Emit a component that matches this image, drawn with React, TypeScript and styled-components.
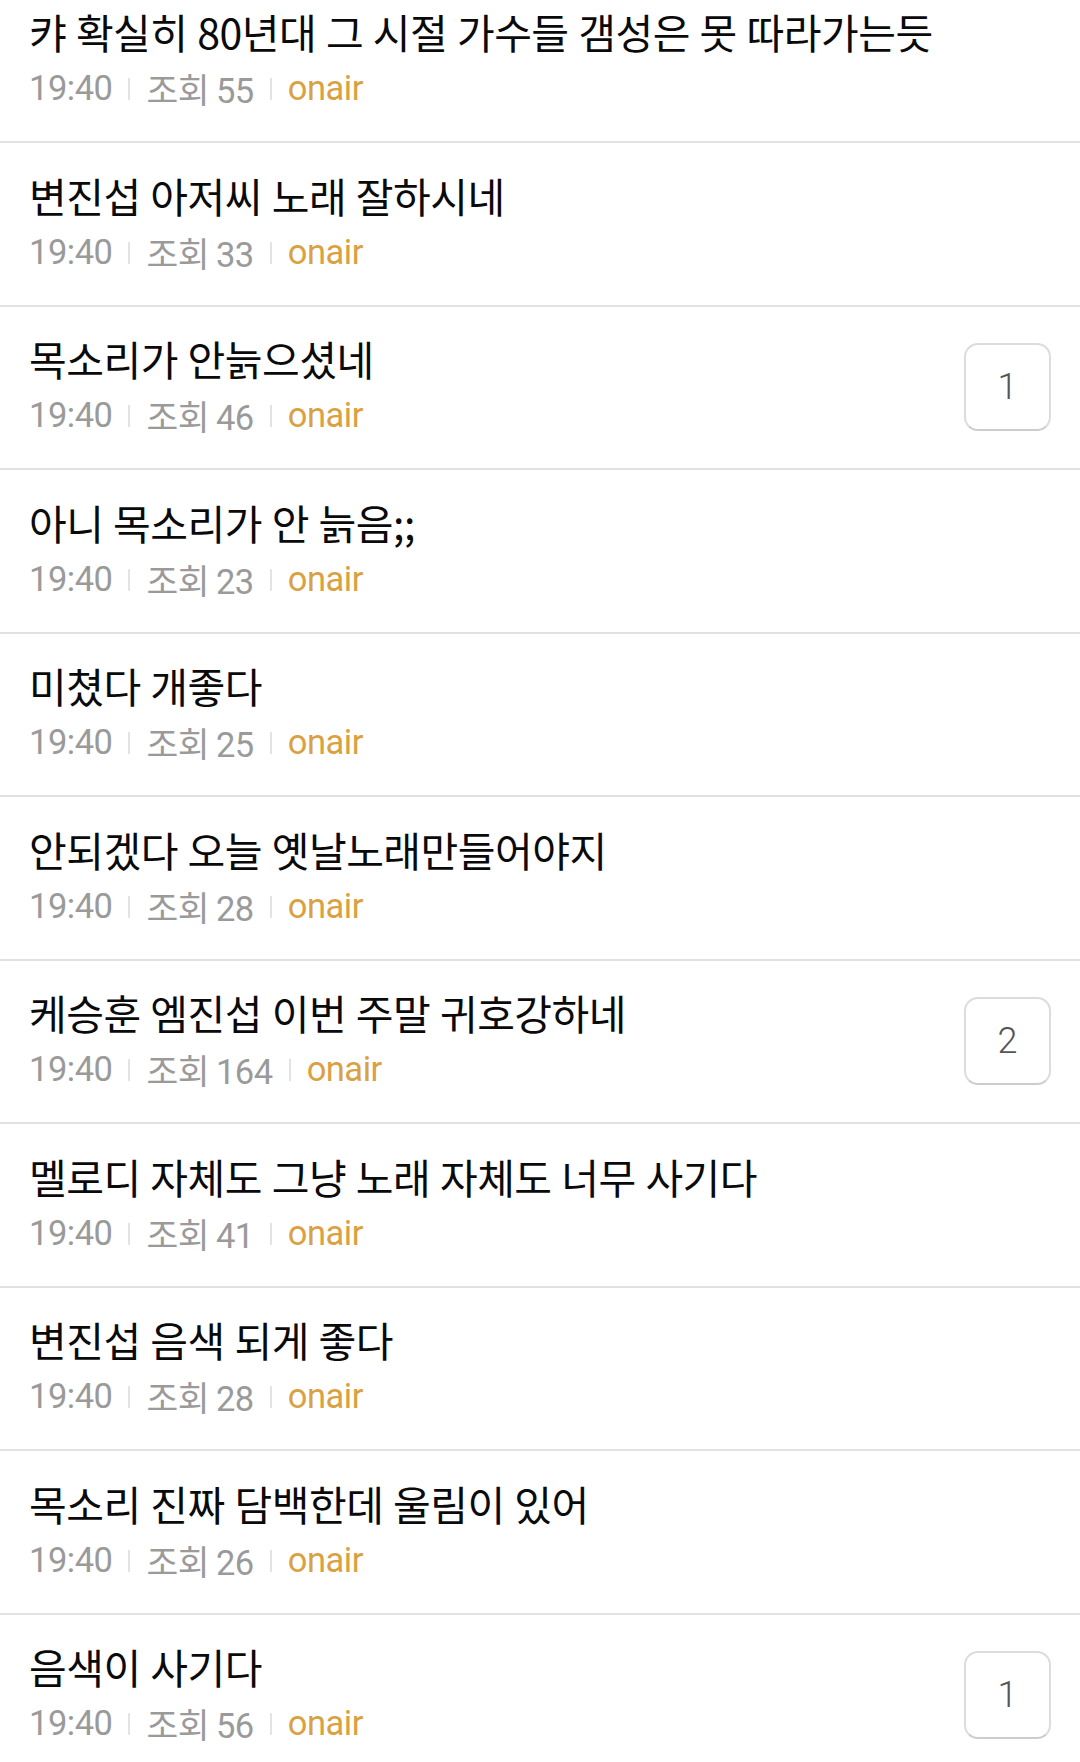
import styled, { createGlobalStyle } from "styled-components";

const GlobalStyle = createGlobalStyle`
  html, body {
    margin: 0;
    padding: 0;
    background: #fff;
    overflow: hidden;
  }
  body {
    font-family: Roboto, "Noto Sans CJK KR", sans-serif;
  }
`;

type Post = {
  title: string;
  views: number;
  comments?: number;
};

const posts: Post[] = [
  { title: "캬 확실히 80년대 그 시절 가수들 갬성은 못 따라가는듯", views: 55 },
  { title: "변진섭 아저씨 노래 잘하시네", views: 33 },
  { title: "목소리가 안늙으셨네", views: 46, comments: 1 },
  { title: "아니 목소리가 안 늙음;;", views: 23 },
  { title: "미쳤다 개좋다", views: 25 },
  { title: "안되겠다 오늘 옛날노래만들어야지", views: 28 },
  { title: "케승훈 엠진섭 이번 주말 귀호강하네", views: 164, comments: 2 },
  { title: "멜로디 자체도 그냥 노래 자체도 너무 사기다", views: 41 },
  { title: "변진섭 음색 되게 좋다", views: 28 },
  { title: "목소리 진짜 담백한데 울림이 있어", views: 26 },
  { title: "음색이 사기다", views: 56, comments: 1 },
];

const App = () => {
  return (
    <>
      <GlobalStyle />
      <List>
        {posts.map((post, i) => (
          <Row key={i}>
            <Info>
              <Title>{post.title}</Title>
              <Meta>
                <MetaText>19:40</MetaText>
                <Divider />
                <MetaText>조회 {post.views}</MetaText>
                <Divider />
                <Board>onair</Board>
              </Meta>
            </Info>
            {post.comments ? <CommentBox>{post.comments}</CommentBox> : null}
          </Row>
        ))}
      </List>
    </>
  );
};

export default App;

const List = styled.div`
  margin-top: -20.5px;
`;

const Row = styled.div`
  height: 161.5px;
  border-bottom: 2px solid #e1e1e1;
  padding: 0 29px;
  display: flex;
  align-items: center;
  justify-content: space-between;
`;

const Info = styled.div`
  display: flex;
  flex-direction: column;
  gap: 6px;
  padding-bottom: 4px;
`;

const Title = styled.div`
  font-family: "Noto Sans CJK KR", sans-serif;
  font-size: 41px;
  line-height: 54px;
  color: #0a0a0a;
  letter-spacing: -0.5px;
  word-spacing: 1px;
  white-space: nowrap;
`;

const Meta = styled.div`
  display: flex;
  align-items: center;
  height: 48px;
`;

const MetaText = styled.span`
  font-family: Roboto, "Noto Sans CJK KR", sans-serif;
  font-size: 34.5px;
  color: #9a9a9a;
  letter-spacing: -0.5px;
  word-spacing: -1px;
`;

const Divider = styled.span`
  width: 2px;
  height: 22px;
  background: #e3e3e3;
  margin: 2px 16px 0;
`;

const Board = styled(MetaText)`
  color: #daa142;
`;

const CommentBox = styled.div`
  width: 83px;
  height: 84px;
  border: 2px solid #dcdcdc;
  border-bottom-color: #cdcdcd;
  border-radius: 14px;
  display: flex;
  align-items: center;
  justify-content: center;
  font-family: Roboto, sans-serif;
  font-size: 36px;
  font-weight: 300;
  color: #555;
`;
